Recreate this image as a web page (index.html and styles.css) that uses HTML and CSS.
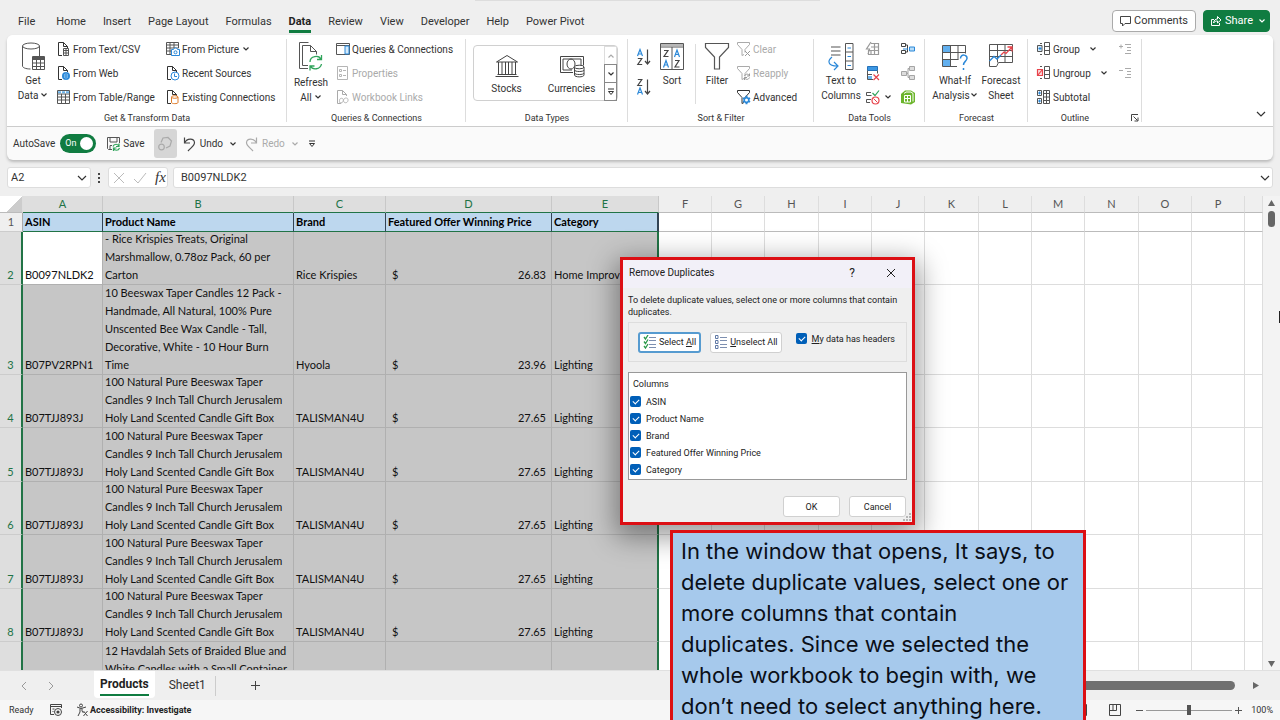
FILE: index.html
```html
<!DOCTYPE html>
<html lang="en">
<head>
<meta charset="utf-8">
<title>Products</title>
<link rel="stylesheet" href="styles.css">
</head>
<body>
<svg class="defs" aria-hidden="true">
  <symbol id="chev" viewBox="0 0 8 8"><path d="M1.5 2.5 4 5l2.500-2.500" fill="none" stroke="currentColor" stroke-width="1.200"/></symbol>
  <symbol id="chevwide" viewBox="0 0 10 10"><path d="M1 3l4 4 4-4" fill="none" stroke="currentColor" stroke-width="1.200"/></symbol>
  <symbol id="more" viewBox="0 0 8 8"><path d="M1 1h6M1.500 3.500h5L4 6.500z" fill="none" stroke="currentColor"/></symbol>
  <symbol id="doc" viewBox="0 0 16 16"><path d="M6 14.500H2.500v-13h5l4 4V7M7.500 1.500v4h4" fill="none" stroke="currentColor"/></symbol>
  <symbol id="funnel" viewBox="0 0 16 16"><path d="M1.500 1.500h12v2L9 8.500v3M1.500 3.500 6 8.500v6l2-1M1.500 1.500v2" fill="none" stroke="currentColor"/></symbol>
</svg>
<div class="app">
  <div class="searchedge"></div>
  <header class="tabs">
    <nav class="tablist">
      <button class="tab t-file">File</button><button class="tab">Home</button><button class="tab">Insert</button><button class="tab">Page Layout</button><button class="tab">Formulas</button><button class="tab active">Data</button><button class="tab">Review</button><button class="tab">View</button><button class="tab">Developer</button><button class="tab">Help</button><button class="tab">Power Pivot</button>
    </nav>
    <button class="pill"><svg width="12" height="12" viewBox="0 0 12 12"><path d="M1.500 1.500h10v7H6L3.500 11V8.500h-2z" fill="none" stroke="#444"/></svg>Comments</button>
    <button class="pill share"><svg width="12" height="12" viewBox="0 0 12 12"><path d="M4 4.500H1.500v6h8V8M3.500 8c.5-3 2-4 4-4V1.500l3.500 3.500-3.500 3V6C6 6 4.500 6.500 3.500 8z" fill="none" stroke="#fff"/></svg>Share<svg class="c8 gaps"><use href="#chev"/></svg></button>
  </header>

  <section class="panel">
    <div class="ribbon">
      <div class="group g-get">
        <div class="body">
          <button class="big"><svg width="26" height="30" viewBox="0 0 26 30"><g fill="none" stroke="#555"><ellipse cx="11" cy="4" rx="8.500" ry="3"/><path d="M2.500 4v20c0 1.500 3 3 8 3M19.500 4v10"/><path d="M12.500 14.500h12v13h-12zM12.500 17.500h12M12.500 21h12M12.500 24.500h12M16.500 17.500v10M20.500 17.500v10"/><path d="M12.500 16h12" stroke-width="2"/></g></svg><span>Get<br>Data<svg class="c8 gaps"><use href="#chev"/></svg></span></button>
          <div class="stack s-a">
            <button class="sm"><svg width="16" height="16" viewBox="0 0 16 16"><use href="#doc"/><path d="M7.500 7.500h5v7h-5zM7.500 9.500h5M7.500 12h5M10 8v7" fill="#fff" stroke="#555"/></svg>From Text/CSV</button>
            <button class="sm"><svg width="16" height="16" viewBox="0 0 16 16"><use href="#doc"/><circle cx="10" cy="11" r="4" fill="#2b88d8"/><path d="M10 7.500v7M8.500 9v4M11.500 9v4" stroke="#8cc4f0" stroke-width=".7"/></svg>From Web</button>
            <button class="sm"><svg width="16" height="16" viewBox="0 0 16 16"><path d="M1.500 1.500h12v13h-12zM1.500 5h12M1.500 8h12M1.500 11h12M5.500 5v9M9.500 5v9" fill="none" stroke="#555"/><path d="M2 3.200h11" stroke="#6db3e8" stroke-width="2" stroke-dasharray="3 1"/></svg>From Table/Range</button>
          </div>
          <div class="stack s-b">
            <button class="sm"><svg width="16" height="16" viewBox="0 0 16 16"><path d="M6 13.500H1.500v-12h12V7M1.500 4h12M1.500 7h12M1.500 10H6M5 1.500v12M9 1.500V7" fill="none" stroke="#555"/><path d="M6.500 8.500h2l1-1.500h2l1 1.500h2v6h-8z" fill="#fff" stroke="#2b88d8"/><circle cx="10.500" cy="11.300" r="1.500" fill="none" stroke="#2b88d8"/></svg>From Picture<svg class="c8"><use href="#chev"/></svg></button>
            <button class="sm"><svg width="16" height="16" viewBox="0 0 16 16"><use href="#doc"/><circle cx="10" cy="11" r="4" fill="#fff" stroke="#2b88d8"/><path d="M9.500 8.500v3h2.500" fill="none" stroke="#2b88d8"/></svg>Recent Sources</button>
            <button class="sm"><svg width="16" height="16" viewBox="0 0 16 16"><use href="#doc"/><path d="M6.500 8v5.500c0 1.500 6.500 1.500 6.500 0V8" fill="#fff" stroke="#e07b28"/><ellipse cx="9.750" cy="8" rx="3.250" ry="1.300" fill="#fff" stroke="#e07b28"/></svg>Existing Connections</button>
          </div>
        </div>
        <div class="caption">Get &amp; Transform Data</div>
      </div>

      <div class="group g-query">
        <div class="body">
          <button class="big"><svg width="26" height="32" viewBox="0 0 26 32"><path d="M10 27.500H1.500v-26h9M10 24.500H4.500v-20h8l6 6v3M12.500 4.500v6h6" fill="none" stroke="#555"/><path d="M12 21c0-6 9-7.500 11-2.500M23.500 14v4.500H19M23.500 23c-1 5.500-9 6.500-11 2M12 29.500V25h4.500" fill="none" stroke="#2fa35a" stroke-width="1.300"/></svg><span>Refresh<br>All<svg class="c8 gaps"><use href="#chev"/></svg></span></button>
          <div class="stack">
            <button class="sm"><svg width="16" height="16" viewBox="0 0 16 16"><path d="M1.500 2.500h13v11h-13zM1.500 4.500h13" fill="none" stroke="#555"/><path d="M10 5h4v8h-4z" fill="#d4eafb" stroke="#2b88d8"/></svg>Queries &amp; Connections</button>
            <button class="sm" disabled><svg width="16" height="16" viewBox="0 0 16 16"><path d="M2.500 1.500h10v13h-10zM4.500 4.500h2v2h-2zM4.500 9.500h2v2h-2zM8 5.500h3M8 10.500h3" fill="none" stroke="#b5b5b5"/></svg>Properties</button>
            <button class="sm" disabled><svg width="16" height="16" viewBox="0 0 16 16"><use href="#doc"/><path d="M4.500 11.500c0-3 4-3 4 0s4 3 4.500 0-3-3-4-1.500-1 4-3 4-1.500-1-1.500-2.500z" fill="none" stroke="#b5b5b5"/></svg>Workbook Links</button>
          </div>
        </div>
        <div class="caption">Queries &amp; Connections</div>
      </div>

      <div class="group g-types">
        <div class="body">
          <div class="gallery">
            <button class="big"><svg width="26" height="26" viewBox="0 0 26 26"><path d="M2.500 9 13 2.500 23.500 9zM4.500 9v12M8 9v12M11.500 9v12M14.500 9v12M18 9v12M21.500 9v12M3.500 21.500h19M1.500 23.500h23" fill="none" stroke="#444"/></svg>Stocks</button>
            <button class="big"><svg width="28" height="26" viewBox="0 0 28 26"><path d="M15 19.500H2.500v-16h23v9M14 17H5V6h18v6" fill="none" stroke="#444"/><ellipse cx="13" cy="11" rx="4" ry="5" fill="none" stroke="#444"/><path d="M16.500 14v8c0 2.500 9.500 2.500 9.500 0v-8" fill="#fff" stroke="#444"/><ellipse cx="21.200" cy="14" rx="4.800" ry="1.800" fill="#fff" stroke="#444"/><path d="M16.500 17c0 2 9.500 2 9.500 0M16.500 20c0 2 9.500 2 9.500 0" fill="none" stroke="#444"/></svg>Currencies</button>
            <div class="spin"><button aria-label="Up" disabled><svg class="c8 flip"><use href="#chev"/></svg></button><button aria-label="Down"><svg class="c8"><use href="#chev"/></svg></button><button aria-label="More"><svg class="c8"><use href="#more"/></svg></button></div>
          </div>
        </div>
        <div class="caption">Data Types</div>
      </div>

      <div class="group g-sort">
        <div class="body">
          <div class="sorts">
            <button aria-label="Sort ascending"><svg width="16" height="18" viewBox="0 0 16 18"><path d="M1.500 8 4 1.500 6.500 8M2.300 6h3.400" fill="none" stroke="#2b88d8" stroke-width="1.200"/><path d="M1.800 10.500h4l-4 6h4.400M11.500 1.500v14M9 13l2.500 3 2.500-3" fill="none" stroke="#444" stroke-width="1.200"/></svg></button>
            <button aria-label="Sort descending"><svg width="16" height="18" viewBox="0 0 16 18"><path d="M1.500 16.500 4 10l2.500 6.500M2.300 14.500h3.400" fill="none" stroke="#2b88d8" stroke-width="1.200"/><path d="M1.800 1.500h4l-4 6h4.400M11.500 1.500v14M9 13l2.500 3 2.500-3" fill="none" stroke="#444" stroke-width="1.200"/></svg></button>
          </div>
          <button class="big b-sort"><svg width="26" height="30" viewBox="0 0 26 30"><path d="M1.500 1.500h23v26h-23zM13 5v22" fill="none" stroke="#555"/><path d="M2 3h22" stroke="#b8b8b8" stroke-width="2"/><path d="M1.500 5h23" stroke="#555"/><path d="M5 8.500h4L5 14.500h4.500M16 18.500h4l-4 6.500h4.500" fill="none" stroke="#444" stroke-width="1.200"/><path d="M4.500 25.500 7 18.500l2.500 7M5.500 23h3.500M15.500 15l2.500-7 2.500 7M16.500 12.500h3.500" fill="none" stroke="#2b88d8" stroke-width="1.200"/></svg>Sort</button>
          <button class="big b-filter"><svg width="26" height="30" viewBox="0 0 26 30"><path d="M1.500 1.500h23v4l-9 9.500v12h-5V15l-9-9.500z" fill="none" stroke="#555" stroke-width="1.200"/></svg>Filter</button>
          <div class="stack">
            <button class="sm" disabled><svg width="16" height="16" viewBox="0 0 16 16"><use href="#funnel"/><path d="M9 10l5 5M14 10l-5 5" stroke="#999"/></svg>Clear</button>
            <button class="sm" disabled><svg width="16" height="16" viewBox="0 0 16 16"><use href="#funnel"/><path d="M8.500 11c1-2.500 4-2.500 5 0M13.500 8.500V11H11M13.500 12.500c-1 2.500-4 2.500-5 0M8.500 15v-2.500H11" fill="none" stroke="#999"/></svg>Reapply</button>
            <button class="sm"><svg width="16" height="16" viewBox="0 0 16 16"><use href="#funnel"/><path d="M10.500 6.800v8.400M7 9l7 4M7 13l7-4" stroke="#2b88d8" stroke-width="2"/><circle cx="10.500" cy="11" r="2.300" fill="#fff" stroke="#2b88d8" stroke-width="1.600"/></svg>Advanced</button>
          </div>
        </div>
        <div class="caption">Sort &amp; Filter</div>
      </div>

      <div class="group g-tools">
        <div class="body">
          <button class="big"><svg width="28" height="30" viewBox="0 0 28 30"><path d="M4 5h9.500M4 9h9.500M4 13h9.500" stroke="#555" stroke-width="1.200"/><path d="M5 15c-5 4-4 9 5 9M7 20l4 4-4 4" fill="none" stroke="#2b88d8" stroke-width="1.200"/><path d="M18.500 1.500h7.500v26h-7.500zM18.500 10h7.500M18.500 19h7.500" fill="none" stroke="#555"/><path d="M20.500 6h3.500M20.500 14.500h3.500M20.500 23.500h3.500" stroke="#2b88d8"/></svg><span>Text to<br>Columns</span></button>
          <div class="icongrid">
            <button aria-label="Flash Fill"><svg width="16" height="16" viewBox="0 0 16 16"><path d="M6 2.500h7.500v11h-10v-4M9.500 2.500v11M6 6h7.500M3 9.500h10.500M6 9v4.500M6 1 1.500 8h3L3 13" fill="none" stroke="#999" stroke-width="1.200"/></svg></button>
            <button aria-label="Consolidate"><svg width="16" height="16" viewBox="0 0 16 16"><path d="M1.500 2.500h4v3h-4zM1.500 9.500h4v3h-4zM5.500 4h2v7h-2" fill="none" stroke="#444"/><path d="M9.500 6h5v4h-5z" fill="#b7dcf8" stroke="#2b88d8"/><path d="M3 8h5" stroke="#2b88d8"/></svg></button>
            <button aria-label="Remove Duplicates"><svg width="16" height="16" viewBox="0 0 16 16"><path d="M2.500 1.500h10v4h-10z" fill="#3c97e3" stroke="#2571b8"/><path d="M12.500 5.500v3M8 14.500H2.500v-9M2.500 9.500H7" fill="none" stroke="#555"/><path d="M3 11h4v3H3z" fill="#6fb5ee"/><path d="M8.500 9.500 14 15M14 9.500 8.500 15" stroke="#e8434b" stroke-width="1.200"/></svg></button>
            <button aria-label="Relationships"><svg width="16" height="16" viewBox="0 0 16 16"><path d="M1.500 6.500h5v4h-5zM9.500 1.500h5v4h-5zM9.500 10.500h5v4h-5zM6.500 8.500H8v-5h1.500M8 8.500v4h1.500" fill="#ddd" stroke="#a5a5a5"/></svg></button>
            <button aria-label="Data Validation"><svg width="16" height="16" viewBox="0 0 16 16"><path d="M6 3.500H1.500v3h5M6 10.500H1.500v3H5" fill="none" stroke="#555"/><path d="M7.500 4 10 6.500 14 1.500" fill="none" stroke="#2fa35a" stroke-width="1.200"/><circle cx="10.500" cy="11.500" r="3.500" fill="none" stroke="#e8434b" stroke-width="1.200"/><path d="M8.500 9.500l4 4" stroke="#e8434b"/></svg><svg class="c8"><use href="#chev"/></svg></button>
            <button aria-label="Manage Data Model"><svg width="16" height="16" viewBox="0 0 16 16"><path d="M1 5 5 1.500h6L15 4v9l-4 2.500-10-1.500z" fill="#6bb52b"/><path d="M4 4.500 6 3h5l2 1.500v8M4.500 6.500h6v6.500h-6zM4.500 9.500h6M7.500 6.500V13" fill="none" stroke="#fff"/></svg></button>
          </div>
        </div>
        <div class="caption">Data Tools</div>
      </div>

      <div class="group g-forecast">
        <div class="body">
          <button class="big"><svg width="28" height="30" viewBox="0 0 28 30"><path d="M2 4h7v6H2zM2 18h7v6H2z" fill="#62b0ef"/><path d="M1.500 3.500h23v8M16 24.500H1.500v-21M1.500 10.500h23M1.500 17.500h16M9.500 3.500v21M17 3.500v14" fill="none" stroke="#555"/><path d="M19.500 16.500c0-5 7-4 6.500 0-.5 3-3.500 3-3.500 6.500M22.500 26v2" fill="none" stroke="#2b88d8" stroke-width="1.500"/></svg><span>What-If<br>Analysis<svg class="c8"><use href="#chev"/></svg></span></button>
          <button class="big"><svg width="28" height="30" viewBox="0 0 28 30"><path d="M2.500 2.500h23v18h-14l-2 4h-7zM2.500 8.500h23M2.500 14.500h23M10.500 2.500v18M18 2.500v18" fill="none" stroke="#555"/><path d="M2.500 19 7 14.500l3 2.500 4-4" fill="none" stroke="#2b88d8" stroke-width="1.300"/><path d="M14 13l3-3 2 1.500L25 5M20.500 5H25v4.500" fill="none" stroke="#e8434b" stroke-width="1.300"/></svg><span>Forecast<br>Sheet</span></button>
        </div>
        <div class="caption">Forecast</div>
      </div>

      <div class="group g-outline">
        <div class="body">
          <div class="stack">
            <button class="sm"><svg width="16" height="16" viewBox="0 0 16 16"><path d="M6 2.500H4M6 13.500H4M8.500 1.500h5v12h-5zM8.500 5.500h5M8.500 9.500h5" fill="none" stroke="#555"/><path d="M1.500 4.500h4.500v6H1.500z" fill="#d4eafb" stroke="#555"/><path d="M2.500 7.500h3M4 6v3" stroke="#2b88d8"/></svg>Group<svg class="c8 gapl"><use href="#chev"/></svg></button>
            <button class="sm"><svg width="16" height="16" viewBox="0 0 16 16"><path d="M6 1.500H4M6 13.500H4M8.500 1.500h5v12h-5zM8.500 5.500h5M8.500 9.500h5" fill="none" stroke="#555"/><path d="M1.500 4.500h5v6h-5zM2 10l4-5" fill="#fbd9db" stroke="#e8434b" stroke-width="1.200"/></svg>Ungroup<svg class="c8 gapl"><use href="#chev"/></svg></button>
            <button class="sm"><svg width="16" height="16" viewBox="0 0 16 16"><path d="M7.500 1.500h6v13h-6zM7.500 4.500h6M7.500 8h6M7.500 11.500h6M10.500 1.500v13M1.500 1.500h4v5h-4zM1.500 9.500h4v5h-4z" fill="none" stroke="#555"/><path d="M2 4h3M3.500 2.500v3M2 12h3M3.500 10.500v3" stroke="#2b88d8"/></svg>Subtotal</button>
          </div>
          <div class="details">
            <button aria-label="Show Detail"><svg width="14" height="14" viewBox="0 0 14 14"><path d="M1 4.500h4M3 2.500v4M7 2.500h6M9 5.500h4M9 8.500h4M7 11.500h6" stroke="#aaa"/></svg></button>
            <button aria-label="Hide Detail"><svg width="14" height="14" viewBox="0 0 14 14"><path d="M1 4.500h4M7 2.500h6M9 5.500h4M9 8.500h4M7 11.500h6" stroke="#aaa"/></svg></button>
          </div>
        </div>
        <div class="caption c-outline">Outline<button class="launch" aria-label="Outline settings"><svg width="8" height="8" viewBox="0 0 8 8"><path d="M.5 7V.5H7M2.500 2.500l4 4M7 3.500V7H3.500" fill="none" stroke="#444"/></svg></button></div>
      </div>
      <button class="collapse" aria-label="Collapse ribbon"><svg class="c10"><use href="#chevwide"/></svg></button>
    </div>

    <div class="qat">
      <label class="auto">AutoSave<input type="checkbox" class="toggle" checked aria-label="AutoSave"><span class="switch" aria-hidden="true">On<i></i></span></label>
      <button class="q-save"><svg width="15" height="16" viewBox="0 0 15 16"><path d="M6 13.500H2.500l-1-1v-11h12V7M4 1.500v4.500h7v-4.500M4 13.500v-4h2" fill="none" stroke="#555"/><path d="M7 10.500c1-3 5-3 6 0M13 7.500v3h-3M13.500 12c-1 3-5 3-6 0M7.500 15v-3h3" fill="none" stroke="#2fa35a" stroke-width="1.200"/></svg>Save</button>
      <button class="q-hex" aria-label="Sensitivity"><svg width="16" height="16" viewBox="0 0 16 16"><path d="M4 6.500 6 2l5-.5 3.500 3.500-1.500 5-4 2" fill="none" stroke="#aaa" stroke-width="1.200"/><circle cx="4.500" cy="11" r="2.800" fill="none" stroke="#aaa" stroke-width="1.200"/></svg></button>
      <button class="q-undo"><svg width="13" height="16" viewBox="0 0 13 16"><path d="M1.500 1.500V7H7M1.500 7C4 2 11 2 11.500 6.500 11.500 10 7.500 12 5 15" fill="none" stroke="#444" stroke-width="1.200"/></svg>Undo<svg class="c8 gaps"><use href="#chev"/></svg></button>
      <button class="q-redo" disabled><svg width="13" height="16" viewBox="0 0 13 16"><path d="M11.500 1.500V7H6M11.500 7C9 2 2 2 1.500 6.500 1.500 10 5.500 12 8 15" fill="none" stroke="#aaa" stroke-width="1.200"/></svg>Redo<svg class="c8 gaps"><use href="#chev"/></svg></button>
      <button class="q-more" aria-label="Customize toolbar"><svg class="c8"><use href="#more"/></svg></button>
    </div>
  </section>

  <section class="fbar">
    <div class="namebox"><input value="A2" aria-label="Name Box"><svg class="c10"><use href="#chevwide"/></svg></div>
    <svg class="dots" width="3" height="12" viewBox="0 0 3 12"><path d="M0 1h2v2H0zM0 5h2v2H0zM0 9h2v2H0z" fill="#444"/></svg>
    <div class="fx"><button aria-label="Cancel entry"><svg width="12" height="12" viewBox="0 0 12 12"><path d="M1 1l10 10M11 1 1 11" stroke="#bbb"/></svg></button><button aria-label="Enter"><svg width="14" height="12" viewBox="0 0 14 12"><path d="M1 7l4 4 8-10" fill="none" stroke="#bbb"/></svg></button><button class="fn" aria-label="Insert function">fx</button></div>
    <div class="formula"><input value="B0097NLDK2" aria-label="Formula"><svg class="c10"><use href="#chevwide"/></svg></div>
  </section>

  <main class="grid">
    <div class="sheet">
      <table>
        <colgroup><col class="w-n"><col class="w-a"><col class="w-b"><col class="w-c"><col class="w-d"><col class="w-e"><col class="w-x"><col class="w-x"><col class="w-y"><col class="w-x"><col class="w-x"><col class="w-y"><col class="w-x"><col class="w-x"><col class="w-y"><col class="w-x"><col class="w-x"><col></colgroup>
        <thead><tr><th class="corner"></th><th class="on">A</th><th class="on">B</th><th class="on">C</th><th class="on">D</th><th class="on">E</th><th>F</th><th>G</th><th>H</th><th>I</th><th>J</th><th>K</th><th>L</th><th>M</th><th>N</th><th>O</th><th>P</th><th></th></tr></thead>
        <tbody id="rows"></tbody>
      </table>
    </div>
    <div class="vscroll"><svg width="9" height="8" viewBox="0 0 9 8"><path d="M4.500 1 8 7H1z" fill="#666"/></svg><div class="vthumb"></div><svg width="9" height="8" viewBox="0 0 9 8"><path d="M4.500 7 8 1H1z" fill="#666"/></svg></div>
  </main>

  <footer>
    <div class="sheets">
      <div class="navs"><button aria-label="Previous sheet"><svg width="8" height="10" viewBox="0 0 8 10"><path d="M6 1 2 5l4 4" fill="none" stroke="#999"/></svg></button><button aria-label="Next sheet"><svg width="8" height="10" viewBox="0 0 8 10"><path d="M2 1l4 4-4 4" fill="none" stroke="#999"/></svg></button></div>
      <button class="stab cur"><span>Products</span></button><button class="stab">Sheet1</button><button class="add" aria-label="New sheet"><svg width="11" height="11" viewBox="0 0 11 11"><path d="M5.500 1v9M1 5.500h9" stroke="#444"/></svg></button>
      <div class="hscroll"><div class="hthumb"></div><svg width="8" height="9" viewBox="0 0 8 9"><path d="M1 1l6 3.500L1 8z" fill="#666"/></svg></div>
    </div>
    <div class="status">
      <span class="ready">Ready</span>
      <svg width="14" height="14" viewBox="0 0 14 14"><path d="M5 11.500H1.500v-10h11V5M1.500 3.500h11M3.500 6h2M3.500 8.500h1" fill="none" stroke="#444"/><circle cx="9" cy="9" r="3.500" fill="none" stroke="#444"/><circle cx="9" cy="9" r="1.600" fill="#444"/></svg>
      <button class="acc"><svg width="13" height="14" viewBox="0 0 13 14"><circle cx="5" cy="2.500" r="1.500" fill="none" stroke="#444"/><path d="M1 4l4 1.500L10 4M4 5.500V9l-2 4M6 5.500V8l1.500 2M7.500 8l4 5M11.500 8l-4 5" fill="none" stroke="#444"/></svg>Accessibility: Investigate</button>
      <div class="zoom">
        <button aria-label="Page layout view"><svg width="12" height="12" viewBox="0 0 12 12"><path d="M.5.5h11v11H.5zM3 3h6v6H3z" fill="none" stroke="#444"/></svg></button>
        <button aria-label="Page break view"><svg width="12" height="12" viewBox="0 0 12 12"><path d="M.5.500h11v11H.5zM.5 6.500h7v-6M4 .5v6" fill="none" stroke="#444"/></svg></button>
        <button class="zbtn" aria-label="Zoom out"><svg width="7" height="7" viewBox="0 0 7 7"><path d="M0 3.500h7" stroke="#555"/></svg></button><input type="range" min="0" max="100" value="50" aria-label="Zoom"><button class="zbtn" aria-label="Zoom in"><svg width="7" height="7" viewBox="0 0 7 7"><path d="M0 3.500h7M3.500 0v7" stroke="#555"/></svg></button>
        <span>100%</span>
      </div>
    </div>
  </footer>
</div>

<div class="dialog" role="dialog" aria-labelledby="dt">
  <div class="dtitle"><span id="dt">Remove Duplicates</span><button aria-label="Help">?</button><button aria-label="Close"><svg width="10" height="10" viewBox="0 0 10 10"><path d="M1 1l8 8M9 1 1 9" stroke="#222"/></svg></button></div>
  <p>To delete duplicate values, select one or more columns that contain duplicates.</p>
  <div class="picker">
    <button class="dbtn focus"><svg width="14" height="14" viewBox="0 0 14 14"><path d="M6 2.500h7M6 5.500h7M6 9.500h7M6 12.500h7" stroke="#7d8fb0"/><path d="M1 2l1.500 2L5 0M1 6.500l1.500 2L5 4.500M1 11l1.500 2L5 9" fill="none" stroke="#2b9a4b" stroke-width="1.300"/></svg><span>Select <u>A</u>ll</span></button>
    <button class="dbtn"><svg width="14" height="14" viewBox="0 0 14 14"><path d="M6 2.500h7M6 5.500h7M6 9.500h7M6 12.500h7" stroke="#7d8fb0"/><path d="M1.500.500h2.500v3H1.500zM1.500 5.500h2.500v3H1.500zM1.500 10.500h2.500v3H1.500z" fill="none" stroke="#5f78a5"/></svg><span><u>U</u>nselect All</span></button>
    <label class="hdrs"><input type="checkbox" checked><span><u>M</u>y data has headers</span></label>
  </div>
  <div class="list">
    <div class="lh">Columns</div>
    <label><input type="checkbox" checked>ASIN</label>
    <label><input type="checkbox" checked>Product Name</label>
    <label><input type="checkbox" checked>Brand</label>
    <label><input type="checkbox" checked>Featured Offer Winning Price</label>
    <label><input type="checkbox" checked>Category</label>
  </div>
  <div class="acts"><button class="dbtn">OK</button><button class="dbtn">Cancel</button></div>
  <svg class="grip" width="8" height="8" viewBox="0 0 8 8"><path d="M6 0h2v2H6zM3 3h2v2H3zM6 3h2v2H6zM0 6h2v2H0zM3 6h2v2H3zM6 6h2v2H6z" fill="#b5b5b5"/></svg>
</div>

<div class="note">In the window that opens, It says, to<br>delete duplicate values, select one or<br>more columns that contain<br>duplicates. Since we selected the<br>whole workbook to begin with, we<br>don’t need to select anything here.</div>
<div class="cursor"></div>
<script src="rows.js"></script>
</body>
</html>
```
FILE: rows.js
```js
const candle = ['100 Natural Pure Beeswax Taper', 'Candles 9 Inch Tall Church Jerusalem', 'Holy Land Scented Candle Gift Box'];
const rows = [
  ['head', 'ASIN', ['Product Name'], 'Brand', 'Featured Offer Winning Price', 'Category'],
  ['short', 'B0097NLDK2', ['- Rice Krispies Treats, Original', 'Marshmallow, 0.78oz Pack, 60 per', 'Carton'], 'Rice Krispies', '26.83', 'Home Improv'],
  ['tall', 'B07PV2RPN1', ['10 Beeswax Taper Candles 12 Pack -', 'Handmade, All Natural, 100% Pure', 'Unscented Bee Wax Candle - Tall,', 'Decorative, White - 10 Hour Burn', 'Time'], 'Hyoola', '23.96', 'Lighting'],
  ['short', 'B07TJJ893J', candle, 'TALISMAN4U', '27.65', 'Lighting'],
  ['mid', 'B07TJJ893J', candle, 'TALISMAN4U', '27.65', 'Lighting'],
  ['short', 'B07TJJ893J', candle, 'TALISMAN4U', '27.65', 'Lighting'],
  ['mid', 'B07TJJ893J', candle, 'TALISMAN4U', '27.65', 'Lighting'],
  ['short', 'B07TJJ893J', candle, 'TALISMAN4U', '27.65', 'Lighting'],
  ['last', '', ['12 Havdalah Sets of Braided Blue and', 'White Candles with a Small Container'], '', '', '']
];
const cell = (html, cls) => `<td class="${cls}"><div class="v">${html}</div></td>`;
document.getElementById('rows').innerHTML = rows.map(([kind, asin, name, brand, price, cat], i) => {
  const money = i === 0 ? price : price ? `<span class="money"><span>$</span><span>${price}</span></span>` : '';
  return `<tr class="${kind}"><th>${kind === 'last' ? '' : i + 1}</th>` +
    cell(asin, 'sel a') + cell(name.join('<br>'), 'sel b') + cell(brand, 'sel') + cell(money, 'sel d') + cell(cat, 'sel e') +
    '<td></td>'.repeat(12) + '</tr>';
}).join('');
```
FILE: styles.css
```css
* { box-sizing: border-box; }
body { margin: 0; height: 100vh; overflow: hidden; font: 10px/15px Roboto, "Open Sans", sans-serif; color: #333; background: #efefef; position: relative; }
button, input { font: inherit; color: inherit; background: none; border: 0; padding: 0; margin: 0; }
button { display: inline-flex; align-items: center; white-space: nowrap; }
svg { flex: none; }
.defs { position: absolute; width: 0; height: 0; }
.c8 { width: 8px; height: 8px; }
.c10 { width: 10px; height: 10px; }
.flip { transform: rotate(180deg); }
.gapl { margin-left: 8px; }
.gaps { margin-left: 2px; }
.app { height: 100%; display: flex; flex-direction: column; }
.searchedge { position: absolute; left: 475px; top: 0; width: 345px; height: 1px; background: #ddd; }

.tabs { height: 35px; display: flex; align-items: center; padding: 6px 10px 0 18px; gap: 7px; }
.tablist { display: flex; flex: 1; gap: 17px; font-size: 11px; }
.tab { height: 25px; border-bottom: 3px solid transparent; padding-top: 4px; }
.t-file { margin-right: 4px; }
.tab.active { font-weight: bold; border-color: #107c41; color: #222; }
.pill { height: 22px; border: 1px solid #aaa; border-radius: 4px; background: #fff; padding: 0 7px 0 6px; gap: 3px; font-size: 11px; }
.pill.share { background: #107c41; border-color: #107c41; color: #fff; padding-right: 3px; }

.panel { margin: 0 7px; border-radius: 6px; background: #fafafa; box-shadow: 0 2px 3px #bbb; flex: none; }
.ribbon { height: 92px; display: flex; background: #fff; border-radius: 6px 6px 0 0; border-bottom: 1px solid #ccc; position: relative; }
.group { position: relative; display: flex; flex-direction: column; padding: 2px 0 0; flex: none; }
.group::after { content: ""; position: absolute; right: 0; top: 4px; bottom: 4px; width: 1px; background: #ddd; }
.body { display: flex; height: 74px; }
.caption { text-align: center; line-height: 14px; font-size: 9px; }
.stack { display: grid; grid-template-rows: repeat(3, 24px); justify-items: start; }
.sm { gap: 1px; }
.s-b .c8 { margin-left: 2px; }
.sm:disabled, .q-redo:disabled { color: #aaa; }
.big { flex-direction: column; padding-top: 5px; gap: 1px; line-height: 15px; text-align: center; }
.g-get { width: 280px; }
.g-get .body { padding-left: 10px; }
.g-get .big { width: 32px; margin-right: 7px; }
.s-a { width: 109px; }
.g-query { width: 179px; }
.g-query .big { width: 42px; margin: 0 3px; padding-top: 4px; gap: 2px; }
.g-types { width: 162px; }
.gallery { display: flex; margin: 8px auto 0 7px; width: 145px; height: 56px; border: 1px solid #d0d0d0; border-radius: 4px; }
.gallery .big { flex: 1; padding-top: 7px; gap: 2px; }
.spin { width: 13px; display: grid; grid-template-rows: repeat(3, 1fr); }
.spin button { justify-content: center; border: 1px solid #888; margin-bottom: -1px; }
.spin button:disabled { color: #aaa; border-color: #ddd; }
.g-sort { width: 186px; }
.sorts { display: grid; grid-template-rows: 30px 30px; padding: 5px 6px 0 8px; }
.b-sort { width: 28px; margin-right: 13px; }
.b-filter { width: 36px; margin-right: 1px; position: relative; }
.b-filter::before { content: ""; position: absolute; left: -4px; top: 7px; height: 60px; width: 1px; background: #ddd; }
.g-tools { width: 111px; }
.g-tools .big { width: 40px; margin: 0 4px 0 7px; }
.icongrid { display: grid; grid-template: repeat(3, 24px) / 35px 18px; }
.icongrid button { gap: 3px; }
.g-forecast { width: 103px; }
.g-forecast .big { width: 44px; margin-left: 8px; }
.g-forecast .big + .big { margin-left: 2px; }
.g-outline { width: 114px; }
.g-outline .body { padding-left: 8px; }
.g-outline .stack { width: 82px; }
.details { display: grid; grid-template-rows: 24px 24px; }
.c-outline { display: flex; justify-content: flex-end; gap: 42px; padding-right: 3px; }
.collapse { margin: auto 7px 7px auto; }

.qat { height: 33px; display: flex; align-items: center; padding: 0 6px; }
.auto { display: flex; align-items: center; gap: 5px; position: relative; }
.toggle { position: absolute; right: 0; width: 36px; height: 19px; opacity: 0; }
.switch { display: flex; align-items: center; justify-content: space-between; width: 36px; height: 19px; border-radius: 10px; background: #107c41; color: #fff; padding: 0 3px 0 5px; font-size: 9px; }
.switch i { width: 13px; height: 13px; border-radius: 50%; background: #fff; }
.q-save { margin-left: 10px; gap: 2px; }
.q-hex { margin-left: 9px; width: 23px; height: 29px; border-radius: 3px; background: #d6d6d6; justify-content: center; }
.q-undo { margin-left: 6px; gap: 4px; }
.q-redo { margin-left: 8px; gap: 4px; }
.q-more { margin-left: 9px; }

.fbar { display: flex; align-items: center; margin: 7px 7px 8px; height: 21px; flex: none; font-size: 11px; }
.namebox, .fx, .formula { display: flex; align-items: center; height: 21px; background: #fff; border: 1px solid #ddd; border-radius: 3px; }
.namebox { width: 84px; padding: 0 3px; }
.fbar input { flex: 1; min-width: 0; outline: 0; }
.dots { margin: 0 7px; }
.fx { width: 60px; padding: 0 4px; gap: 8px; margin-right: 5px; }
.fn { font: italic 15px "Liberation Serif", serif; }
.formula { flex: 1; padding: 0 2px 0 7px; }

.grid { flex: 1; min-height: 0; display: flex; }
.sheet { flex: 1; overflow: hidden; background: #fff; }
table { width: 100%; table-layout: fixed; border-collapse: separate; border-spacing: 0; font: 11px/18px Lato, sans-serif; color: #111; }
.w-n { width: 23px; } .w-a { width: 80px; } .w-b { width: 191px; } .w-c { width: 92px; } .w-d { width: 166px; } .w-e { width: 107px; } .w-x { width: 53px; } .w-y { width: 54px; }
th, td { padding: 0; border-right: 1px solid #ddd; border-bottom: 1px solid #ddd; }
th { font-weight: normal; font-size: 11px; background: #efefef; color: #555; }
thead th { height: 17px; line-height: 16px; border-bottom-color: #bbb; }
thead th.on { background: #dedede; color: #217346; border-right-color: #c8c8c8; border-bottom: 1px solid #217346; }
.corner { background: linear-gradient(135deg, transparent 60%, #ccc 60%) !important; }
tbody th { vertical-align: bottom; background: #dedede; color: #217346; border-right: 2px solid #217346; border-bottom-color: #ccc; }
.head th { background: #efefef; color: #555; border-right: 1px solid #aaa; }
.v { display: flex; align-items: flex-end; height: 52px; padding: 0 2px; white-space: nowrap; overflow: hidden; }
.mid .v { height: 53px; }
.tall .v { height: 89px; }
.last .v { height: 54px; align-items: flex-start; }
.head .v { height: 17px; font-weight: bold; color: #000; }
.sel { background: #c6c6c6; border-color: #b0b0b0; }
.head .sel { background: #bdd7ee; border-right-color: #345; border-bottom: 1px solid #217346; }
.head td { border-bottom: 1px solid #bbb; }
.head + tr .a { background: #fff; }
.e { border-right: 2px solid #217346; }
.money { display: flex; justify-content: space-between; width: 100%; padding: 0 3px 0 4px; }
.vscroll { width: 17px; background: #f3f3f3; display: flex; flex-direction: column; align-items: center; padding: 3px 0 2px; }
.vthumb { width: 7px; height: 16px; border-radius: 4px; background: #666; margin: 4px 0 auto; }

footer { flex: none; }
.sheets { height: 30px; display: flex; align-items: center; border-top: 1px solid #e0e0e0; font-size: 12px; }
.navs { display: flex; gap: 19px; padding: 0 39px 0 20px; }
.stab { height: 20px; padding: 0 9px; border-right: 1px solid #ccc; }
.stab.cur { height: 27px; align-self: flex-start; background: #fff; border-radius: 0 0 4px 4px; padding: 0 6px; margin-right: 5px; font-weight: bold; color: #222; border: 0; }
.cur span { border-bottom: 2px solid #107c41; line-height: 20px; }
.add { margin-left: 34px; }
.hscroll { flex: 1; display: flex; align-items: center; justify-content: flex-end; gap: 17px; padding-right: 20px; }
.hthumb { width: 400px; height: 9px; border-radius: 5px; background: #707070; }
.status { height: 20px; display: flex; align-items: center; background: #f6f6f6; padding: 0 7px 0 9px; font-size: 9px; }
.ready { width: 40px; }
.acc { margin-left: 13px; font-weight: bold; color: #222; gap: 1px; }
.zoom { margin-left: auto; display: flex; align-items: center; }
.zoom button { margin-right: 12px; }
.zoom button:first-child { margin-right: 22px; }
.zoom .zbtn { margin: 0 3px; }
.zoom span { margin-left: 6px; }
input[type=range] { appearance: none; width: 86px; height: 12px; background: linear-gradient(#999, #999) center / 100% 1px no-repeat; }
input[type=range]::-webkit-slider-thumb { appearance: none; width: 4px; height: 10px; background: #555; }

.dialog { position: absolute; left: 620px; top: 257px; width: 295px; height: 268px; border: 3px solid #dc0f14; background: #efefef; box-shadow: 0 8px 26px 4px rgba(0, 0, 0, .4); display: flex; flex-direction: column; font-size: 9px; line-height: 12px; color: #222; padding: 0 5px; }
.dtitle { display: flex; align-items: center; height: 28px; margin: 0 -5px; padding: 0 16px 2px 6px; background: #f2f0f8; font-size: 10px; gap: 31px; }
.dtitle span { flex: 1; }
.dtitle button:first-of-type { font-size: 12px; }
.dialog p { margin: 6px 0 4px; }
.picker { display: flex; align-items: center; border: 1px solid #ddd; height: 40px; padding: 0 9px; gap: 9px; flex: none; }
.dbtn { justify-content: center; height: 21px; border: 1px solid #d0d0d0; border-radius: 3px; background: #fff; gap: 2px; padding: 0 3px; }
.dbtn.focus { border: 2px solid #569bd0; }
.hdrs { display: flex; align-items: center; gap: 5px; margin: 0 0 7px 5px; white-space: nowrap; }
.dialog input { appearance: none; flex: none; width: 11px; height: 11px; border-radius: 2px; background: #005fb8; position: relative; }
.dialog input::after { content: ""; position: absolute; left: 3px; top: 3px; width: 5px; height: 3px; border: solid #fff; border-width: 0 0 1px 1px; transform: rotate(-45deg); }
.list { margin-top: 10px; border: 1px solid #999; background: #fff; height: 108px; padding: 3px 1px; flex: none; }
.lh { line-height: 17px; padding-left: 3px; }
.list label { display: flex; align-items: center; gap: 5px; height: 17px; }
.acts { display: flex; justify-content: flex-end; gap: 9px; margin: 16px 1px 0 0; }
.acts .dbtn { width: 57px; }
.grip { position: absolute; right: 1px; bottom: 1px; }
.note { position: absolute; left: 670px; top: 530px; width: 416px; height: 200px; border: 3px solid #dc0f14; background: #a6c9ec; padding: 3px 8px; font: 22px/31px Inter, sans-serif; color: #0a0f18; white-space: nowrap; }
.cursor { position: absolute; right: 0; top: 311px; width: 1px; height: 12px; background: #222; }
```
